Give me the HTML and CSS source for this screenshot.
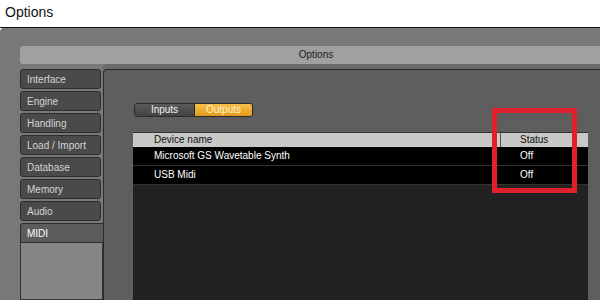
FILE: index.html
```html
<!DOCTYPE html>
<html lang="en">
<head>
  <meta charset="UTF-8">
  <title>Options</title>
  <link rel="stylesheet" href="styles.css">
</head>
<body>
  <div class="titlebar">Options</div>
  <div class="window">
    <div class="header">Options</div>
    <div class="main">
      <div class="sidebar">
        <div class="tab">Interface</div>
        <div class="tab">Engine</div>
        <div class="tab">Handling</div>
        <div class="tab">Load / Import</div>
        <div class="tab">Database</div>
        <div class="tab">Memory</div>
        <div class="tab">Audio</div>
        <div class="tab active">MIDI</div>
        <div class="sidebar-fill"></div>
      </div>
      <div class="panel">
        <div class="segmented">
          <div class="seg">Inputs</div>
          <div class="seg on">Outputs</div>
        </div>
        <div class="devices">
          <div class="row head">
            <div class="name">Device name</div>
            <div class="status">Status</div>
          </div>
          <div class="row">
            <div class="name">Microsoft GS Wavetable Synth</div>
            <div class="status">Off</div>
          </div>
          <div class="row">
            <div class="name">USB Midi</div>
            <div class="status">Off</div>
          </div>
        </div>
      </div>
    </div>
  </div>
  <div class="highlight"></div>
</body>
</html>
```

FILE: styles.css
```css
body {
  margin: 0;
  width: 600px;
  height: 300px;
  overflow: hidden;
  font-family: "Liberation Sans", Arial, sans-serif;
  background: #fff;
}
.titlebar {
  height: 27px;
  padding-left: 5px;
  line-height: 24px;
  font-size: 14px;
  color: #111;
  border-bottom: 1px solid #111;
}
.window {
  height: 272px;
  background: #787878;
  border-radius: 4px 0 0 0;
  padding-left: 20px;
  padding-top: 18px;
  box-sizing: border-box;
  display: flex;
  flex-direction: column;
}
.header {
  height: 18px;
  line-height: 18px;
  background: #a0a0a0;
  border-radius: 3px 0 0 3px;
  text-align: center;
  font-size: 10px;
  color: #1a1a1a;
  padding-left: 12px;
}
.main {
  flex: 1;
  display: flex;
  margin-top: 5px;
}
.sidebar {
  width: 83px;
  display: flex;
  flex-direction: column;
}
.tab {
  width: 81px;
  height: 20px;
  line-height: 19px;
  margin-bottom: 2px;
  padding-left: 6px;
  box-sizing: border-box;
  background: #4a4a4a;
  border: 1px solid #2c2c2c;
  border-radius: 3px;
  font-size: 10px;
  color: #d4d4d4;
}
.tab.active {
  width: 83px;
  margin-bottom: 0;
  background: #5c5c5c;
  color: #fff;
  border-radius: 3px 0 0 0;
  border-right: none;
}
.sidebar-fill {
  flex: 1;
  background: #858585;
  border: 1px solid #333;
  border-top: none;
}
.panel {
  flex: 1;
  background: #5e5e5e;
  border-top: 1px solid #2a2a2a;
  border-left: 1px solid #2a2a2a;
  border-radius: 4px 0 0 0;
  box-shadow: 0 -5px 0 #6b6b6b;
  padding: 33px 12px 0 30px;
  display: flex;
  flex-direction: column;
}
.segmented {
  display: flex;
  width: 119px;
  height: 14px;
  border: 1px solid #2a2a2a;
  border-radius: 3px;
  overflow: hidden;
  box-sizing: border-box;
  font-size: 10px;
  line-height: 12px;
}
.seg {
  width: 59px;
  text-align: center;
  color: #f0f0f0;
  background: linear-gradient(#5a5a5a, #434343);
  border-right: 1px solid #2a2a2a;
}
.seg.on {
  flex: 1;
  border-right: none;
  color: #fff3cc;
  background: linear-gradient(#f7c04a, #e49a1c);
}
.devices {
  flex: 1;
  margin-top: 15px;
  margin-left: -1px;
  background: #222;
  border-top: 1px solid #333;
  font-size: 10px;
}
.row {
  display: flex;
  height: 18px;
  line-height: 18px;
  background: #000;
  color: #fff;
  border-bottom: 1px solid #333;
}
.row.head {
  height: 14px;
  line-height: 14px;
  background: #c8c8c8;
  color: #111;
  border-bottom: none;
}
.name {
  flex: 1;
  padding-left: 21px;
}
.status {
  width: 68px;
  padding-left: 20px;
}
.row.head .status {
  border-left: 1px solid #555;
  padding-left: 19px;
}
.highlight {
  position: absolute;
  left: 492px;
  top: 108px;
  width: 85px;
  height: 85px;
  box-sizing: border-box;
  border: 5px solid #e0202c;
}
```
